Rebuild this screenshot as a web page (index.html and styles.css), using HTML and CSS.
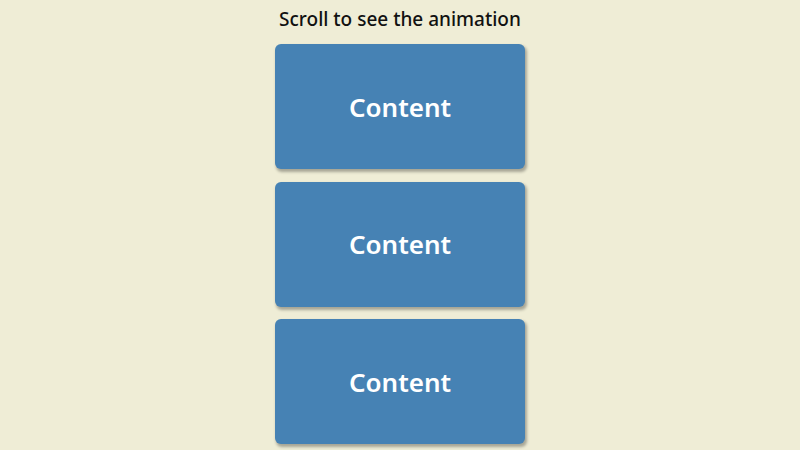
FILE: index.html
```html
<!DOCTYPE html>
<html lang="en">
<head>
  <meta charset="UTF-8">
  <meta name="viewport" content="width=device-width, initial-scale=1.0">
  <title>Scroll Animation</title>
  <link rel="stylesheet" href="styles.css">
</head>
<body>
  <h1>Scroll to see the animation</h1>
  <div class="boxes">
    <div class="box"><h2>Content</h2></div>
    <div class="box"><h2>Content</h2></div>
    <div class="box"><h2>Content</h2></div>
  </div>
</body>
</html>
```

FILE: styles.css
```css
* {
  box-sizing: border-box;
}

body {
  background-color: #efedd6;
  font-family: 'Noto Sans', 'Open Sans', sans-serif;
  display: flex;
  flex-direction: column;
  align-items: center;
  margin: 0;
  overflow: hidden;
  height: 100vh;
}

h1 {
  font-size: 19px;
  font-weight: 500;
  line-height: 24px;
  margin: 7px 0 13px;
  color: #111;
}

.boxes {
  display: flex;
  flex-direction: column;
  gap: 12.5px;
}

.box {
  background-color: steelblue;
  color: #fff;
  width: 250px;
  height: 125px;
  display: flex;
  align-items: center;
  justify-content: center;
  border-radius: 6px;
  box-shadow: 1.5px 2.5px 3px rgba(0, 0, 0, 0.3);
  flex-shrink: 0;
}

.box h2 {
  font-size: 26px;
  font-weight: 600;
  margin: 0;
}
```
